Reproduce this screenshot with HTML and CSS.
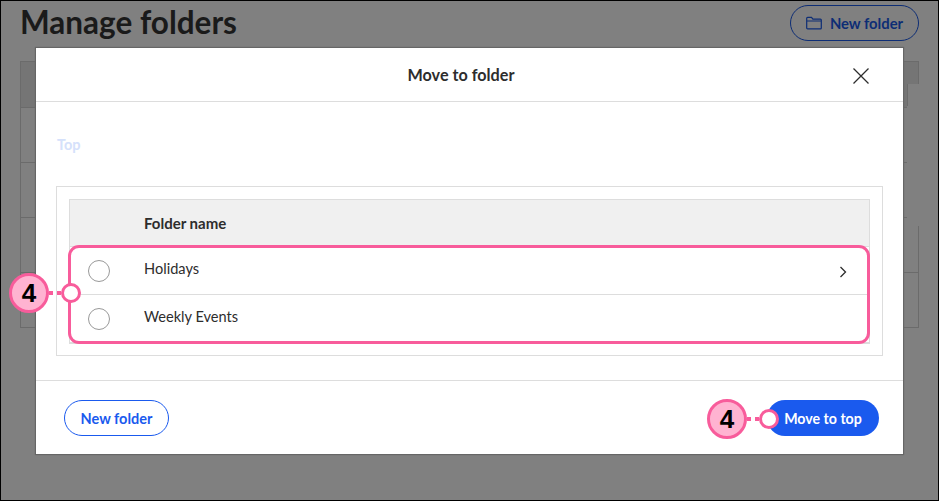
FILE: index.html
```html
<!DOCTYPE html>
<html>
<head>
<title>Manage folders</title>
<link rel="stylesheet" href="styles.css">
<meta name="viewport" content="width=device-width, initial-scale=1.0">
</head>
<body>
<div class="screen">
  <div class="page-head">
    <h1>Manage folders</h1>
    <button class="page-btn">
      <svg class="folder-icon" viewBox="0 0 16 14" width="16" height="14"><path d="M.7 12V2.200c0-.5.4-.9.9-.9h3.900l1.400 1.900h7.500c.5 0 .9.400.9.900V12c0 .5-.4.900-.9.900H1.600c-.5 0-.9-.4-.9-.9zM.7 5h14.600" fill="none" stroke="currentColor" stroke-width="1.200"/></svg>
      New folder
    </button>
  </div>
  <div class="bg-table">
    <div class="bg-row bg-header"></div>
    <div class="bg-row"></div>
    <div class="bg-row"></div>
    <div class="bg-row"></div>
    <div class="bg-row"></div>
  </div>
  <div class="bg-menu"></div>

  <div class="modal">
    <div class="modal-head">
      <span class="modal-title">Move to folder</span>
      <svg class="close-icon" viewBox="0 0 16 16" width="16" height="16"><path d="M.5.5l15 15M15.500.5l-15 15" fill="none" stroke="#2d2d2d" stroke-width="1.300"/></svg>
    </div>
    <div class="modal-body">
      <div class="crumb">Top</div>
      <div class="folder-box">
        <div class="folder-table">
          <div class="folder-row folder-header">
            <span class="folder-name">Folder name</span>
          </div>
          <div class="folder-row">
            <span class="radio"></span>
            <span class="folder-name">Holidays</span>
            <svg class="chevron" viewBox="0 0 8 12" width="8" height="12"><path d="M1.500 1l5 5-5 5" fill="none" stroke="#2d2d2d" stroke-width="1.300"/></svg>
          </div>
          <div class="folder-row">
            <span class="radio"></span>
            <span class="folder-name">Weekly Events</span>
          </div>
          <div class="highlight"></div>
        </div>
      </div>
    </div>
    <div class="modal-foot">
      <button class="btn btn-outline">New folder</button>
      <button class="btn btn-solid">Move to top</button>
    </div>
  </div>

  <div class="callout callout-rows">
    <span class="badge">4</span><span class="dash"></span><span class="dot"></span>
  </div>
  <div class="callout callout-move">
    <span class="badge">4</span><span class="dash"></span><span class="dot"></span>
  </div>
</div>
</body>
</html>
```

FILE: styles.css
```css
* {
  box-sizing: border-box;
}
body {
  margin: 0;
  font-family: "Lato", "Liberation Sans", sans-serif;
  color: #2d2d2d;
}
button {
  font-family: inherit;
  background: none;
  padding: 0;
}
.screen {
  position: relative;
  width: 939px;
  height: 501px;
  overflow: hidden;
  background-color: #808080;
  box-shadow: inset 0 0 0 1px #000;
  padding: 5px 20px 0 20px;
}

/* page behind the dialog */
.page-head {
  display: flex;
  justify-content: space-between;
  align-items: center;
  height: 36px;
  margin-bottom: 20px;
}
h1 {
  margin: -2px 0 0 0;
  font-size: 31.500px;
  font-weight: 700;
  color: #1a1a1a;
}
.page-btn {
  display: flex;
  align-items: center;
  justify-content: center;
  gap: 8px;
  width: 129px;
  height: 36px;
  border: 1px solid #0d2d75;
  border-radius: 18px;
  color: #0d2d75;
  font-size: 14.800px;
  font-weight: 700;
}
.bg-table {
  border-left: 1px solid #6b6b6b;
  border-right: 1px solid #6b6b6b;
}
.bg-row {
  height: 55px;
  border-bottom: 1px solid #6b6b6b;
}
.bg-header {
  height: 47px;
  background-color: #757575;
  border-top: 1px solid #6b6b6b;
}
.bg-menu {
  position: absolute;
  left: 907px;
  top: 84px;
  width: 14px;
  height: 142px;
  background-color: #808080;
  border-left: 1px solid #6b6b6b;
  border-image: linear-gradient(#6b6b6b 23px, transparent 23px) 1;
}

/* dialog */
.modal {
  position: absolute;
  left: 36px;
  top: 48px;
  width: 867px;
  height: 406px;
  display: flex;
  flex-direction: column;
  background-color: #fff;
  box-shadow: 0 0 1px 1px #666;
}
.modal-head {
  position: relative;
  display: flex;
  justify-content: center;
  align-items: center;
  height: 54px;
  border-bottom: 1px solid #ddd;
}
.modal-title {
  margin-left: -17px;
  font-size: 16.200px;
  font-weight: 700;
}
.close-icon {
  position: absolute;
  right: 34px;
  top: 20px;
}
.modal-body {
  height: 279px;
  padding: 34px 20px 0 20px;
  border-bottom: 1px solid #ddd;
}
.crumb {
  height: 50px;
  padding-left: 1px;
  font-size: 14.500px;
  font-weight: 700;
  line-height: 17px;
  color: #d5e1fb;
}
.folder-box {
  height: 170px;
  padding: 12px;
  border: 1px solid #ddd;
}
.folder-table {
  position: relative;
  border: 1px solid #ddd;
}
.folder-row {
  position: relative;
  display: flex;
  align-items: center;
  height: 48px;
  padding-left: 74px;
  border-bottom: 1px solid #ddd;
}
.folder-row:last-of-type {
  border-bottom: none;
}
.folder-header {
  height: 47px;
  background-color: #f0f0f0;
}
.folder-header .folder-name {
  font-size: 15px;
  font-weight: 700;
  margin-top: -1px;
}
.folder-name {
  font-size: 14.600px;
  margin-top: -4px;
}
.radio {
  position: absolute;
  left: 18px;
  top: 13px;
  width: 22px;
  height: 22px;
  border: 1px solid #999;
  border-radius: 50%;
  background-color: #fff;
}
.chevron {
  position: absolute;
  right: 22px;
  top: 19px;
}
.highlight {
  position: absolute;
  left: -2px;
  top: 45px;
  width: 802px;
  height: 99px;
  border: 3px solid #f85c9b;
  border-radius: 11px;
}
.modal-foot {
  display: flex;
  justify-content: space-between;
  padding: 19px 24px 0 28px;
}
.btn {
  height: 36px;
  border-radius: 18px;
  font-size: 14.500px;
  font-weight: 700;
}
.btn-outline {
  width: 105px;
  border: 1px solid #1a5aee;
  color: #1a5aee;
}
.btn-solid {
  width: 112px;
  border: none;
  font-size: 14.200px;
  background-color: #1a5aee;
  color: #fff;
}

/* numbered callouts */
.callout {
  position: absolute;
  display: flex;
  align-items: center;
}
.callout-rows {
  left: 9px;
  top: 273px;
}
.callout-move {
  left: 707px;
  top: 399px;
}
.badge {
  display: flex;
  justify-content: center;
  align-items: center;
  width: 40px;
  height: 40px;
  border: 3px solid #f85c9b;
  border-radius: 50%;
  background-color: #ffb3d1;
  color: #000;
  font-family: "Liberation Sans", sans-serif;
  font-size: 26px;
  font-weight: 700;
}
.dash {
  width: 12px;
  height: 4px;
  background: linear-gradient(to right, #f85c9b 4px, transparent 4px, transparent 8px, #f85c9b 8px);
}
.dot {
  width: 20px;
  height: 20px;
  border: 3.500px solid #f85c9b;
  border-radius: 50%;
  background-color: #fff;
}
```
